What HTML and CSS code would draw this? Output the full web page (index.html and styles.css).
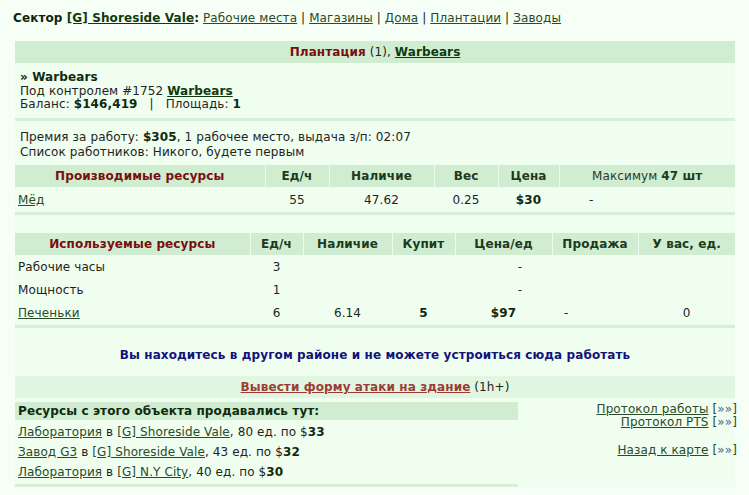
FILE: index.html
```html
<!DOCTYPE html>
<html lang="ru">
<head>
<meta charset="utf-8">
<title>Плантация</title>
<link rel="stylesheet" href="styles.css">
</head>
<body>
<div class="nav"><b>Сектор <a class="lb" href="#">[G] Shoreside Vale</a>:</b> <a href="#">Рабочие места</a> | <a href="#">Магазины</a> | <a href="#">Дома</a> | <a href="#">Плантации</a> | <a href="#">Заводы</a></div>
<div class="page">
  <div class="bar"><b class="red">Плантация</b> (1), <a class="lb" href="#">Warbears</a></div>
  <div class="info">
    <div class="line"><b class="dk">» Warbears</b></div>
    <div class="line">Под контролем #1752 <a class="lb" href="#">Warbears</a></div>
    <div class="line">Баланс: <b class="dk">$146,419</b><span class="sep">|</span>Площадь: <b class="dk">1</b></div>
  </div>
  <div class="work">
    <div class="line">Премия за работу: <b class="dk">$305</b>, 1 рабочее место, выдача з/п: 02:07</div>
    <div class="line">Список работников: Никого, будете первым</div>
  </div>
  <table class="grid t1">
    <colgroup><col class="c250"><col class="c64"><col class="c105"><col class="c64"><col class="c61"><col></colgroup>
    <tr class="head">
      <th class="red">Производимые ресурсы</th><th>Ед/ч</th><th>Наличие</th><th>Вес</th><th>Цена</th><th class="norm">Максимум <b>47 шт</b></th>
    </tr>
    <tr class="row">
      <td class="name"><a href="#">Мёд</a></td><td>55</td><td>47.62</td><td>0.25</td><td><b class="dk">$30</b></td><td class="dash1">-</td>
    </tr>
  </table>
  <table class="grid t2">
    <colgroup><col class="c235"><col class="c53"><col class="c89"><col class="c63"><col class="c97"><col class="c86"><col></colgroup>
    <tr class="head">
      <th class="red">Используемые ресурсы</th><th>Ед/ч</th><th>Наличие</th><th>Купит</th><th>Цена/ед</th><th>Продажа</th><th>У вас, ед.</th>
    </tr>
    <tr class="row">
      <td class="name">Рабочие часы</td><td>3</td><td></td><td colspan="3" class="dash2">-</td><td></td>
    </tr>
    <tr class="row">
      <td class="name">Мощность</td><td>1</td><td></td><td colspan="3" class="dash2">-</td><td></td>
    </tr>
    <tr class="row last">
      <td class="name"><a href="#">Печеньки</a></td><td>6</td><td>6.14</td><td><b class="dk">5</b></td><td><b class="dk">$97</b></td><td class="dash3">-</td><td>0</td>
    </tr>
  </table>
  <div class="notice">Вы находитесь в другом районе и не можете устроиться сюда работать</div>
  <div class="attack"><a class="atk" href="#">Вывести форму атаки на здание</a> (1h+)</div>
  <div class="bottom">
    <div class="sold">
      <div class="sold-head">Ресурсы с этого объекта продавались тут:</div>
      <div class="sold-row first"><a href="#">Лаборатория</a> в <a href="#">[G] Shoreside Vale</a>, 80 ед. по $<b class="dk">33</b></div>
      <div class="sold-row"><a href="#">Завод G3</a> в <a href="#">[G] Shoreside Vale</a>, 43 ед. по $<b class="dk">32</b></div>
      <div class="sold-row lastrow"><a href="#">Лаборатория</a> в <a href="#">[G] N.Y City</a>, 40 ед. по $<b class="dk">30</b></div>
    </div>
    <div class="links">
      <div class="lk"><a href="#">Протокол работы</a> <span class="br">[<a href="#">»»</a>]</span></div>
      <div class="lk"><a href="#">Протокол PTS</a> <span class="br">[<a href="#">»»</a>]</span></div>
      <div class="lk gap"><a href="#">Назад к карте</a> <span class="br">[<a href="#">»»</a>]</span></div>
    </div>
  </div>
</div>
</body>
</html>
```
FILE: styles.css
```css
html, body {
  margin: 0;
  padding: 0;
  background: #f5fff5;
}
body {
  font-family: "DejaVu Sans", Verdana, sans-serif;
  font-size: 12px;
  line-height: 14px;
  letter-spacing: 0.1px;
  color: #1e241e;
}
a {
  color: #2a4a2a;
  text-decoration: underline;
}
a.lb {
  color: #0e3a0e;
  font-weight: bold;
}
b { font-weight: bold; }
.dk { color: #0f2a0f; }
.red { color: #7a0e0e; }

.nav {
  padding: 11px 0 0 13px;
  height: 15px;
  margin-bottom: 15px;
  color: #0f1f0f;
}
.nav b { color: #0f1f0f; }

.page {
  width: 720px;
  margin-left: 15px;
  background: #f0fef0;
}
.bar {
  height: 22px;
  line-height: 22px;
  background: #d1edd1;
  text-align: center;
}
.info {
  padding: 7px 5px 0 5px;
  height: 48px;
  border-bottom: 3px solid #d6efd6;
}
.info .line { height: 13.5px; }
.sep { padding: 0 12px; }
.work {
  padding: 9px 5px 0 5px;
  height: 35px;
}
.work .line { height: 15px; }

.grid {
  width: 720px;
  border-collapse: collapse;
  table-layout: fixed;
}
.grid th, .grid td { padding: 0; }
.head th {
  background: #d1edd1;
  height: 22px;
  font-weight: bold;
  color: #1c3a1c;
  border-left: 1px solid #eefcee;
  text-align: center;
}
.head th:first-child { border-left: 0; }
.head th.norm { font-weight: normal; color: #2a3a2a; }
.head th.norm b { color: #1c3a1c; }
.head th.red { color: #7a0e0e; }
.row td {
  text-align: center;
  height: 23px;
}
.row td.name { text-align: left; padding-left: 3px; }
.t1 .row td { height: 25px; border-bottom: 3px solid #d6efd6; }
.t1 { margin-bottom: 18px; }
.t2 .row.last td { height: 24px; border-bottom: 3px solid #d6efd6; }
.dash1 { text-align: left !important; padding-left: 30px !important; }
.dash2 { padding-left: 10px !important; }
.dash3 { text-align: left !important; padding-left: 12px !important; }

.c250 { width: 250px; }
.c64 { width: 64px; }
.c105 { width: 105px; }
.c61 { width: 61px; }
.c235 { width: 235px; }
.c53 { width: 53px; }
.c89 { width: 89px; }
.c63 { width: 63px; }
.c97 { width: 97px; }
.c86 { width: 86px; }

.notice {
  height: 48px;
  line-height: 54px;
  text-align: center;
  font-weight: bold;
  color: #12127a;
}
.attack {
  height: 22px;
  line-height: 22px;
  background: #e0f6e0;
  text-align: center;
  margin-bottom: 4px;
}
a.atk {
  color: #9c3c36;
  font-weight: bold;
}
.bottom {
  display: flex;
  justify-content: space-between;
  background: #f0fef0;
}
.sold {
  width: 503px;
  border-bottom: 3px solid #d6efd6;
}
.sold-head {
  background: #d1edd1;
  height: 18px;
  line-height: 18px;
  padding-left: 3px;
  font-weight: bold;
  color: #0f2a0f;
}
.sold-row {
  height: 20px;
  line-height: 20px;
  padding-left: 3px;
}
.sold-row.first { padding-top: 2px; }
.sold-row.lastrow { height: 22px; line-height: 20px; }
.links {
  text-align: right;
  padding-top: 1px;
  margin-right: -2px;
}
.lk { height: 13px; line-height: 13px; }
.lk.gap { margin-top: 15px; }
.br { color: #2a4a2a; }
.br a { text-decoration: none; color: #4a6a8a; }
```
